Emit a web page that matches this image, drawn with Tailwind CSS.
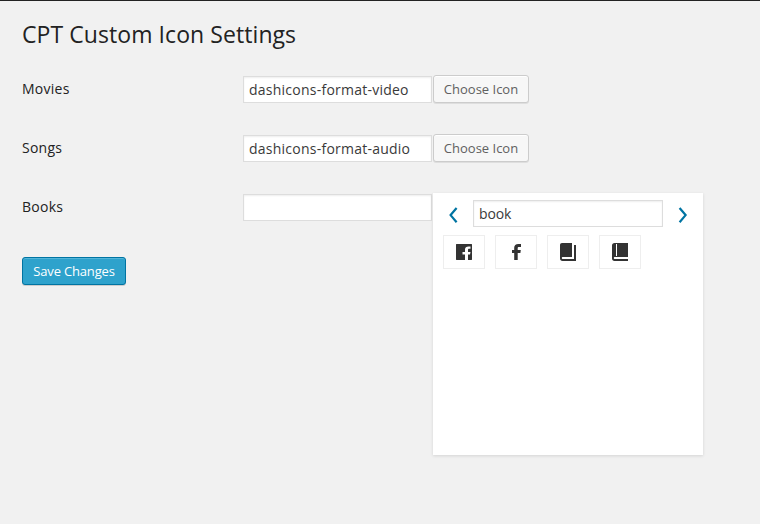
<!DOCTYPE html>
<html lang="en">
<head>
<meta charset="utf-8">
<title>CPT Custom Icon Settings</title>
<script src="https://cdn.jsdelivr.net/npm/@tailwindcss/browser@4"></script>
</head>
<body class="h-[524px] overflow-hidden border-t border-[#222] bg-[#f1f1f1] pl-[22px] font-['Open_Sans',sans-serif] text-[14px] text-[#222]">
  <h1 class="pt-[19px] text-[23px] leading-[29px] font-normal tracking-[0.07px] whitespace-nowrap">CPT Custom Icon Settings</h1>
  <form class="mt-[25px]">
    <div class="flex h-[59px] items-start">
      <label class="w-[221px] pt-[6px] leading-[18px] font-medium tracking-[0.25px]">Movies</label>
      <input class="mt-[2px] h-[27px] w-[189px] border border-[#ddd] bg-white px-[5px] tracking-[0.24px] text-[#3a3a3a] shadow-[inset_0_1px_2px_rgba(0,0,0,0.07)]" value="dashicons-format-video">
      <button type="button" class="ml-px mt-px h-[28px] w-[96px] rounded-[3px] border border-[#ccc] bg-[#f7f7f7] pt-[2px] text-[13px] text-[#606060] shadow-[inset_0_1px_0_#fff,0_1px_0_rgba(0,0,0,0.08)]">Choose Icon</button>
    </div>
    <div class="flex h-[59px] items-start">
      <label class="w-[221px] pt-[6px] leading-[18px] font-medium tracking-[0.25px]">Songs</label>
      <input class="mt-[2px] h-[27px] w-[189px] border border-[#ddd] bg-white px-[5px] tracking-[0.24px] text-[#3a3a3a] shadow-[inset_0_1px_2px_rgba(0,0,0,0.07)]" value="dashicons-format-audio">
      <button type="button" class="ml-px mt-px h-[28px] w-[96px] rounded-[3px] border border-[#ccc] bg-[#f7f7f7] pt-[2px] text-[13px] text-[#606060] shadow-[inset_0_1px_0_#fff,0_1px_0_rgba(0,0,0,0.08)]">Choose Icon</button>
    </div>
    <div class="flex items-start">
      <div class="w-[221px]">
        <label class="block pt-[6px] leading-[18px] font-medium tracking-[0.25px]">Books</label>
        <button type="button" class="mt-[41px] block h-[28px] w-[104px] rounded-[3px] border border-[#0074a2] bg-[#2ea2cc] pt-[2px] text-[13px] font-medium tracking-[-0.17px] text-white shadow-[inset_0_1px_0_rgba(120,200,230,0.5),0_1px_0_rgba(0,0,0,0.15)]">Save Changes</button>
      </div>
      <input class="mt-[2px] h-[27px] w-[189px] border border-[#ddd] bg-white px-[5px] text-[#3a3a3a] shadow-[inset_0_1px_2px_rgba(0,0,0,0.07)]">
      <div class="ml-px mt-px h-[262px] w-[270px] bg-white px-[10px] pt-[7px] shadow-[0_1px_3px_rgba(0,0,0,0.12)]">
        <div class="flex h-[27px] items-center">
          <svg class="h-[20px] w-[30px]" viewBox="0 0 30 20" fill="none" stroke="#0074a2" stroke-width="2.2"><path d="M13.600 4 7.600 11.100l6 7.100"/></svg>
          <input class="h-[27px] w-[190px] border border-[#ddd] bg-white px-[5px] tracking-[-0.1px] text-[#3a3a3a] shadow-[inset_0_1px_2px_rgba(0,0,0,0.07)]" value="book">
          <svg class="h-[20px] w-[30px]" viewBox="0 0 30 20" fill="none" stroke="#0074a2" stroke-width="2.2"><path d="m16.600 4 6 7.100-6 7.100"/></svg>
        </div>
        <div class="mt-[8px] flex gap-[10px]">
          <div class="flex h-[34px] w-[42px] items-center justify-center border border-[#eee]">
            <svg class="h-[20px] w-[20px]" viewBox="0 0 20 20" fill="#333"><path d="M2.500 2h15c.3 0 .5.200.5.500v15c0 .3-.2.500-.5.500H14v-5.500h2l.5-2.500H14V8c0-.8.3-1.200 1.300-1.200h1.200V4.500c-.5-.1-1.100-.1-2-.1-2.200 0-3.500 1-3.500 3.200V10H8.500v2.500H11V18H2.500c-.3 0-.5-.2-.5-.5v-15c0-.3.2-.5.5-.500z"/></svg>
          </div>
          <div class="flex h-[34px] w-[42px] items-center justify-center border border-[#eee]">
            <svg class="h-[20px] w-[20px]" viewBox="0 0 20 20" fill="#333"><path d="M8.200 18h3.500v-7h2.700l.4-3h-3.100V6.300c0-.8.3-1.300 1.400-1.300H15V2.100C14.200 2 13.300 2 12.300 2 9.700 2 8.200 3.300 8.200 5.800V8H6v3h2.200v7z"/></svg>
          </div>
          <div class="flex h-[34px] w-[42px] items-center justify-center border border-[#eee]">
            <svg class="h-[20px] w-[20px]" viewBox="0 0 20 20" fill="#333"><path d="M4 1h10v14H4.500c-.4 0-.7.400-.7 1s.3 1 .7 1H16V3h2v16H4.500C3 19 2 18 2 16.500V3c0-1.200.8-2 2-2z"/></svg>
          </div>
          <div class="flex h-[34px] w-[42px] items-center justify-center border border-[#eee]">
            <svg class="h-[20px] w-[20px]" viewBox="0 0 20 20" fill="#333"><path fill-rule="evenodd" d="M4.500 1H18v14H4.500c-.4 0-.7.400-.7 1s.3 1 .7 1H18v2H4.500C3 19 2 18 2 16.500v-13C2 2 3 1 4.500 1zM6 2v12h1V2z"/></svg>
          </div>
        </div>
      </div>
    </div>
  </form>
</body>
</html>
